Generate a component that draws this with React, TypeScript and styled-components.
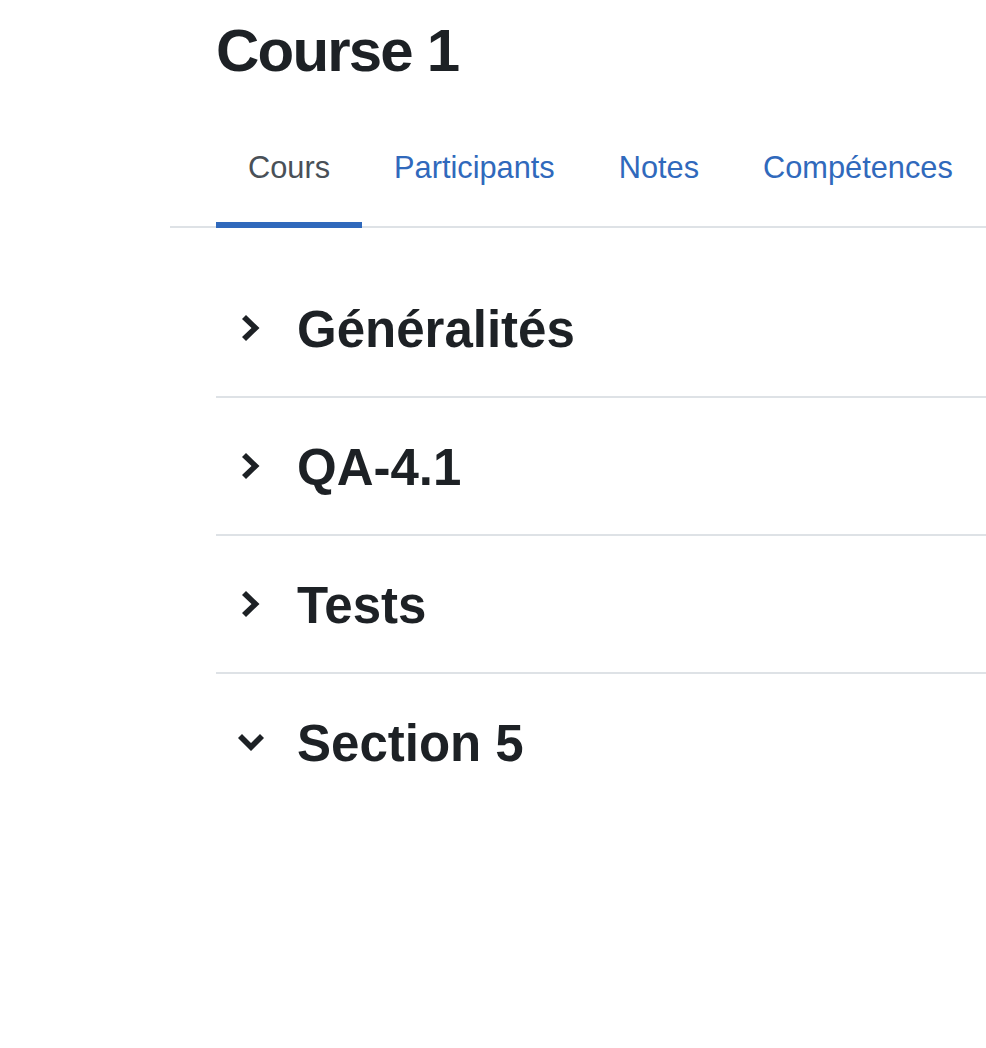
import styled, { createGlobalStyle } from 'styled-components';

const GlobalStyle = createGlobalStyle`
  html, body {
    margin: 0;
    padding: 0;
    background: #fff;
    overflow: hidden;
  }
  body {
    font-family: "Liberation Sans", Arial, sans-serif;
    color: #1d2125;
  }
`;

const Page = styled.div`
  padding-left: 170px;
  width: 100%;
  box-sizing: border-box;
`;

const Header = styled.header`
  padding-left: 46px;
`;

const Title = styled.h1`
  margin: 15px 0 0;
  font-size: 60px;
  line-height: 72px;
  font-weight: 700;
  letter-spacing: -1.8px;
  color: #1d2125;
`;

const Tabs = styled.nav`
  display: flex;
  margin-top: 42px;
  padding-left: 46px;
  border-bottom: 2px solid #dee2e6;
`;

const Tab = styled.a<{ $active?: boolean }>`
  display: block;
  padding: 16px 32px 32px 32px;
  margin-bottom: -2px;
  font-size: 30.75px;
  line-height: 45px;
  text-decoration: none;
  cursor: pointer;
  color: ${(p) => (p.$active ? '#495057' : '#3069bc')};
  border-bottom: 6px solid ${(p) => (p.$active ? '#3069bc' : 'transparent')};
`;

const Sections = styled.ul`
  list-style: none;
  margin: 32px 0 0 46px;
  padding: 0;
`;

const SectionRow = styled.li<{ $last?: boolean }>`
  display: flex;
  align-items: center;
  padding: 39px 0 36px;
  border-bottom: 2px solid ${(p) => (p.$last ? 'transparent' : '#dee2e6')};
`;

const Toggle = styled.button`
  display: flex;
  align-items: center;
  justify-content: center;
  width: 70px;
  height: 40px;
  margin-right: 11px;
  margin-top: -3px;
  padding: 0;
  border: 0;
  background: none;
  color: #1d2125;
  cursor: pointer;
`;

const SectionTitle = styled.h3`
  margin: 0;
  font-size: 51px;
  line-height: 61px;
  font-weight: 700;
  color: #1d2125;
`;

const Chevron = ({ open }: { open: boolean }) =>
  open ? (
    <svg width="26" height="17" viewBox="0 0 26 17" aria-hidden="true">
      <path d="M4 2 L0 6 L13 19 L26 6 L22 2 L13 11 Z" transform="translate(0 -2)" fill="currentColor" />
    </svg>
  ) : (
    <svg width="18" height="26" viewBox="0 0 18 26" aria-hidden="true">
      <path d="M0 4 L4 0 L17.5 13 L4 26 L0 22 L9.5 13 Z" fill="currentColor" />
    </svg>
  );

const sections = [
  { name: 'Généralités', open: false },
  { name: 'QA-4.1', open: false },
  { name: 'Tests', open: false },
  { name: 'Section 5', open: true },
];

const tabs = ['Cours', 'Participants', 'Notes', 'Compétences'];

export default function App() {
  return (
    <>
      <GlobalStyle />
      <Page>
        <Header>
          <Title>Course 1</Title>
        </Header>
        <Tabs>
          {tabs.map((t, i) => (
            <Tab key={t} $active={i === 0}>
              {t}
            </Tab>
          ))}
        </Tabs>
        <Sections>
          {sections.map((s, i) => (
            <SectionRow key={s.name} $last={i === sections.length - 1}>
              <Toggle aria-label={s.open ? 'Réduire' : 'Développer'}>
                <Chevron open={s.open} />
              </Toggle>
              <SectionTitle>{s.name}</SectionTitle>
            </SectionRow>
          ))}
        </Sections>
      </Page>
    </>
  );
}
